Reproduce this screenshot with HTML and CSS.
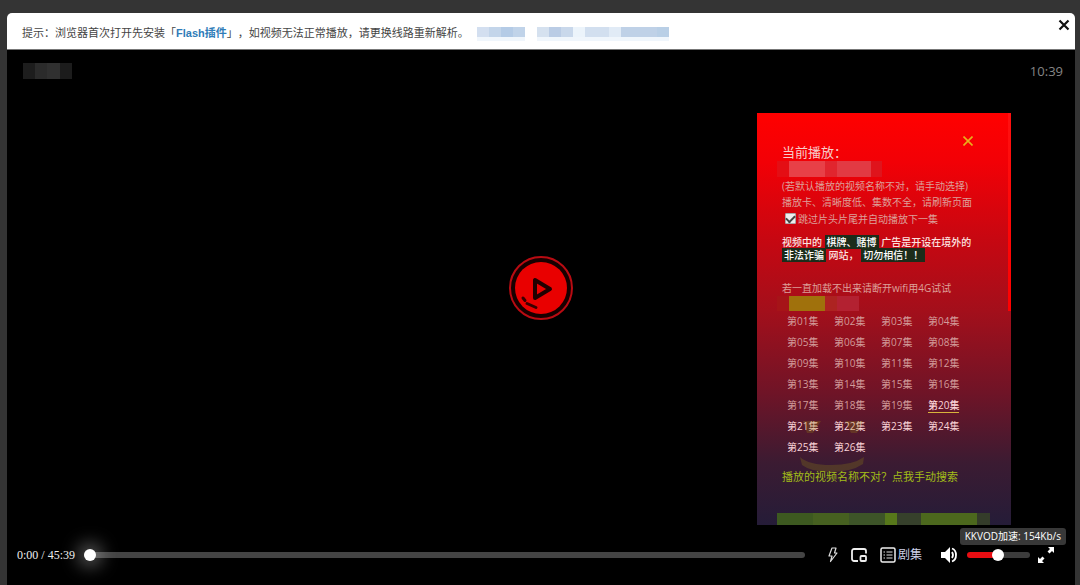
FILE: index.html
```html
<!DOCTYPE html>
<html lang="zh-CN">
<head>
<meta charset="utf-8">
<title>视频播放</title>
<link rel="stylesheet" href="styles.css">
</head>
<body>
<main class="window">
  <header class="notice">
    <p class="notice-text">提示：浏览器首次打开先安装「<a class="plugin" href="#">Flash插件</a>」，如视频无法正常播放，请更换线路重新解析。</p>
    <span class="mosaic mosaic-a"></span>
    <span class="mosaic mosaic-b"></span>
    <button class="close" type="button" aria-label="关闭">
      <svg width="12" height="12" viewBox="0 0 12 12"><path d="M1.500 1.500l9 9M10.500 1.500l-9 9" stroke="#111" stroke-width="2.200"/></svg>
    </button>
  </header>

  <section class="stage">
    <div class="stage-top">
      <span class="mosaic mosaic-title"></span>
      <time class="clock">10:39</time>
    </div>
    <button class="play" type="button" aria-label="播放">
      <svg width="68" height="68" viewBox="0 0 68 68">
        <circle cx="34" cy="34" r="31" fill="#180000" stroke="#b80b12" stroke-width="2"/>
        <circle cx="34" cy="34" r="26" fill="#e90000"/>
        <path d="M28 26v18l15-9z" fill="none" stroke="#210000" stroke-width="4" stroke-linejoin="round"/>
        <path d="M16 44l2 2.500M20 49.500l9 4" fill="none" stroke="#3a0000" stroke-width="3" stroke-linecap="round"/>
      </svg>
    </button>

    <aside class="panel">
      <svg class="face" width="78" height="56" viewBox="0 0 78 56">
        <path d="M10 4h18l-8 12h-6zM52 4h18l-6 12h-6zM7 40q9 8 31 8t33-8l-1 7q-12 8-32 8T9 48z" fill="#9a8a10"/>
      </svg>
      <button class="panel-close" type="button" aria-label="关闭面板">
        <svg width="10" height="10" viewBox="0 0 10 10"><path d="M.5.5l9 9M9.500.5l-9 9" stroke="#e8b01c" stroke-width="1.600"/></svg>
      </button>
      <h2 class="now">当前播放：</h2>
      <span class="mosaic mosaic-name"></span>
      <p class="hint">(若默认播放的视频名称不对，请手动选择)<br>播放卡、清晰度低、集数不全，请刷新页面</p>
      <label class="skip"><input class="tick" type="checkbox" checked>跳过片头片尾并自动播放下一集</label>
      <p class="warning">视频中的 <mark>棋牌、赌博</mark> 广告是开设在境外的<br><mark>非法诈骗</mark> 网站， <mark>切勿相信！！</mark></p>
      <p class="network">若一直加载不出来请断开wifi用4G试试</p>
      <span class="mosaic mosaic-line"></span>
      <nav class="episodes">
        <a href="#">第01集</a><a href="#">第02集</a><a href="#">第03集</a><a href="#">第04集</a>
        <a href="#">第05集</a><a href="#">第06集</a><a href="#">第07集</a><a href="#">第08集</a>
        <a href="#">第09集</a><a href="#">第10集</a><a href="#">第11集</a><a href="#">第12集</a>
        <a href="#">第13集</a><a href="#">第14集</a><a href="#">第15集</a><a href="#">第16集</a>
        <a href="#">第17集</a><a href="#">第18集</a><a href="#">第19集</a><a class="fresh current" href="#">第20集</a>
        <a class="fresh" href="#">第21集</a><a class="fresh" href="#">第22集</a><a class="fresh" href="#">第23集</a><a class="fresh" href="#">第24集</a>
        <a class="fresh" href="#">第25集</a><a class="fresh" href="#">第26集</a>
      </nav>
      <a class="search" href="#">播放的视频名称不对？点我手动搜索</a>
      <span class="mosaic mosaic-foot"></span>
    </aside>
  </section>

  <footer class="controls">
    <span class="time">0:00 / 45:39</span>
    <input class="progress" type="range" min="0" max="2739" value="0" aria-label="播放进度">
    <button class="icon bolt" type="button" aria-label="加速">
      <svg width="12" height="18" viewBox="0 0 12 18"><path d="M5 2h4L7.500 7H10L3.500 15.500 5 10H2z" fill="none" stroke="#ddd" stroke-width="1.200" stroke-linejoin="round"/></svg>
    </button>
    <button class="icon" type="button" aria-label="画中画">
      <svg width="18" height="16" viewBox="0 0 18 16"><path d="M8 14H4a2 2 0 0 1-2-2V4a2 2 0 0 1 2-2h10a2 2 0 0 1 2 2v2.500" fill="none" stroke="#eee" stroke-width="1.800"/><rect x="10.500" y="9" width="5.500" height="5" rx="1" fill="none" stroke="#eee" stroke-width="1.800"/></svg>
    </button>
    <button class="icon list" type="button">
      <svg width="16" height="16" viewBox="0 0 16 16"><rect x="1" y="1" width="14" height="14" rx="1.500" fill="none" stroke="#eee" stroke-width="1.500"/><path d="M3.500 5h1.500M6.500 5h6M3.500 8h1.500M6.500 8h6M3.500 11h1.500M6.500 11h6" stroke="#ddd" stroke-width="1.200"/></svg>
      <span>剧集</span>
    </button>
    <button class="icon sound" type="button" aria-label="音量">
      <svg width="18" height="18" viewBox="0 0 18 18"><path d="M1 6h4l5-5v16l-5-5H1z" fill="#fff"/><path d="M12 6q2 3 0 6M12 2.500q4 1.500 4 6.500t-4 6.500" fill="none" stroke="#fff" stroke-width="1.800"/></svg>
    </button>
    <input class="volume" type="range" min="0" max="100" value="49" aria-label="音量大小">
    <div class="full-wrap">
      <span class="tooltip">KKVOD加速: 154Kb/s</span>
      <button class="icon" type="button" aria-label="全屏">
        <svg width="18" height="18" viewBox="0 0 18 18"><path d="M11 1h6v6l-2-2-2.500 2.500-2-2L13 3zM1 17v-6l2 2 2.500-2.500 2 2L5 15l2 2z" fill="#fff"/></svg>
      </button>
    </div>
  </footer>
</main>
</body>
</html>
```
FILE: styles.css
```css
* { box-sizing: border-box; }

body {
  margin: 0;
  background: #343434;
  font-family: "Open Sans", "Noto Sans CJK SC", sans-serif;
  font-size: 10px;
}

p, h2 { margin: 0; }
a { color: inherit; text-decoration: none; }
button { padding: 0; border: 0; background: none; color: inherit; font: inherit; cursor: pointer; }
svg { display: block; }
.mosaic { display: block; }

.window {
  min-height: 100vh;
  padding: 13px 5px 0 7px;
  display: flex;
  flex-direction: column;
}

/* notice bar */
.notice {
  height: 37px;
  padding: 0 5px 0 15px;
  display: flex;
  align-items: center;
  background: #fff;
  border-bottom: 1px solid #777;
  border-radius: 5px 5px 0 0;
  color: #444;
  font-family: "Liberation Sans", "Noto Sans CJK SC", sans-serif;
  font-size: 11px;
}
.notice-text { white-space: nowrap; padding-top: 2px; text-spacing-trim: space-all; }
.notice .mosaic { height: 14px; margin-top: 6px; border-bottom: 4px solid #f0f6fc; }
.plugin { color: #2f7cb8; font-weight: bold; }
.mosaic-a {
  width: 48px;
  margin-left: 8px;
  background: linear-gradient(90deg, #d3dff0 0 12px, #c3d5ea 12px 24px, #b4cbe6 24px 36px, #c0d3e9 36px);
}
.mosaic-b {
  width: 132px;
  margin-left: 12px;
  background: linear-gradient(90deg, #d5e1ef 0 12px, #bacce5 12px 24px, #c9d8eb 24px 36px, #ecf4fb 36px 48px, #d2dfef 48px 72px, #e1ebf6 72px 84px, #bfd1e7 84px 120px, #b9cfe6 120px);
}
.close { margin-left: auto; align-self: flex-start; padding-top: 6px; }

/* video area */
.stage {
  flex: 1;
  position: relative;
  display: grid;
  place-items: center;
  background: #000;
}
.stage-top {
  position: absolute;
  inset: 12px 12px auto 16px;
  display: flex;
  justify-content: space-between;
  align-items: center;
}
.mosaic-title {
  width: 49px;
  height: 16px;
  background: linear-gradient(90deg, #1d1d1d 0 12px, #2b2b2b 12px 24px, #303030 24px 37px, #1c1c1c 37px);
}
.clock { color: #858585; font-size: 13px; line-height: 18px; }

/* episode panel */
.panel {
  position: absolute;
  top: 63px;
  right: 64px;
  bottom: 0;
  width: 254px;
  padding: 30px 20px 0 25px;
  overflow: hidden;
  background:
    linear-gradient(#ff1010, #f00) right top / 3px 198px no-repeat,
    linear-gradient(#ff0000, #f20006 12%, #c80711 30%, #a30f1b 48%, #6f1427 68%, #3b1b32 85%, #251c38);
  color: #dda09a;
}
.panel-close { position: absolute; top: 23px; right: 38px; }
.face { position: absolute; left: 36px; top: 304px; opacity: 0.25; pointer-events: none; }
.now { color: #f6cdcb; font-size: 13px; font-weight: normal; line-height: 18px; }
.mosaic-name {
  width: 105px;
  height: 16px;
  margin-left: -5px;
  background: linear-gradient(90deg, #e40e14 0 12px, #e84047 12px 48px, #e1252e 48px 60px, #e23a43 60px 94px, #df141c 94px);
}
.hint { padding-top: 1px; line-height: 16px; white-space: nowrap; }
.skip { display: flex; align-items: center; height: 16px; padding-left: 3px; white-space: nowrap; }
.tick {
  appearance: none;
  width: 11px;
  height: 11px;
  margin: 0 2px 0 0;
  border: 1px solid #aaa;
  border-radius: 1px;
  background: #eee;
  display: grid;
  place-items: center;
}
.tick:checked::before {
  content: "";
  width: 7px;
  height: 4px;
  border: solid #444;
  border-width: 0 0 2px 2px;
  transform: rotate(-45deg);
}
.warning { padding-top: 10px; color: #fbe3e0; font-weight: 500; line-height: 13px; white-space: nowrap; }
.warning mark { padding: 0 2px; background: #1c2c1a; color: #fff; line-height: 12px; }
.network { margin-top: 18px; line-height: 16px; }
.mosaic-line {
  width: 82px;
  height: 15px;
  margin-left: -5px;
  background: linear-gradient(90deg, #a61418 0 12px, #a0710c 12px 48px, #ad2321 48px 60px, #b32131 60px);
}
.episodes {
  display: grid;
  grid-template-columns: repeat(4, 47px);
  grid-auto-rows: 21px;
  line-height: 20px;
  padding-left: 5px;
  color: #d29b9a;
}
.episodes a { justify-self: start; white-space: nowrap; }
.episodes .fresh { color: #fbd4d8; }
.episodes .current {
  align-self: center;
  line-height: 14px;
  font-weight: 500;
  border-bottom: 1px solid #d7b43c;
}
.search { display: block; margin-top: 9px; color: #a2bd18; font-size: 11px; line-height: 20px; }
.mosaic-foot {
  width: 213px;
  height: 16px;
  margin: 26px 0 0 -5px;
  background: linear-gradient(90deg, #3d5920 0 36px, #466020 36px 72px, #3d5428 72px 108px, #57781a 108px 120px, #36402b 120px 144px, #4c681d 144px 200px, #343c2a 200px);
}

/* control bar */
.controls {
  height: 60px;
  padding: 0 20px 0 10px;
  display: flex;
  align-items: center;
  background: #000;
  color: #eee;
}
.time { width: 67px; font-family: "Liberation Serif", serif; font-size: 12px; white-space: nowrap; }
.progress, .volume { appearance: none; height: 12px; margin: 0; background: none; }
.progress { flex: 1; min-width: 0; }
.progress::-webkit-slider-runnable-track { height: 6px; border-radius: 3px; background: #444; }
.progress::-webkit-slider-thumb {
  appearance: none;
  width: 12px;
  height: 12px;
  margin-top: -3px;
  border-radius: 50%;
  background: #fff;
  box-shadow: 0 0 18px 5px #ffffff66;
}
.icon { flex: none; display: flex; align-items: center; }
.bolt { margin: 0 11px 0 22px; }
.list { margin-left: 12px; gap: 2px; color: #ccd0e8; font-size: 12px; line-height: 16px; }
.sound { margin-left: 18px; }
.volume { width: 63px; margin-left: 9px; }
.volume::-webkit-slider-runnable-track {
  height: 6px;
  border-radius: 3px;
  background: linear-gradient(90deg, #e80d12 50%, #3c3c3c 50%);
}
.volume::-webkit-slider-thumb {
  appearance: none;
  width: 12px;
  height: 12px;
  margin-top: -3px;
  border-radius: 50%;
  background: #fff;
}
.full-wrap { position: relative; margin-left: 7px; }
.tooltip {
  position: absolute;
  right: -11px;
  bottom: 19px;
  padding: 0 5px;
  border-radius: 3px;
  background: #383838;
  color: #fff;
  line-height: 17px;
  white-space: nowrap;
}
```
